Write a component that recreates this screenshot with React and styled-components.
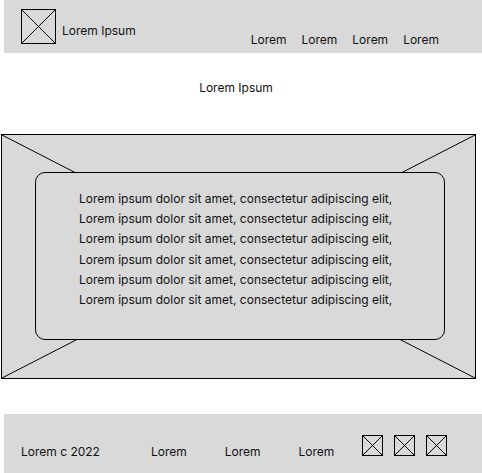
import React from "react";
import styled, { createGlobalStyle } from "styled-components";

const GlobalStyle = createGlobalStyle`
  html, body {
    margin: 0;
    padding: 0;
    background: #ffffff;
    font-family: Inter, "Liberation Sans", sans-serif;
    color: #111111;
  }
`;

const Page = styled.div`
  width: 482px;
  display: flex;
  flex-direction: column;
`;

const Header = styled.header`
  margin-left: 4px;
  height: 53px;
  background: #d9d9d9;
  display: flex;
  align-items: flex-start;
  padding-left: 17px;
  box-sizing: border-box;
  font-size: 12px;
`;

const Brand = styled.div`
  display: flex;
  align-items: flex-start;
  gap: 6px;
  margin-top: 9px;
`;

const BrandName = styled.span`
  padding-top: 14px;
`;

const Nav = styled.nav`
  display: flex;
  gap: 15px;
  margin-left: 115px;
  margin-top: 32px;
`;

const Title = styled.h1`
  margin: 27px 0 0;
  width: 472px;
  text-align: center;
  font-size: 12px;
  font-weight: 400;
  line-height: 16px;
`;

const Hero = styled.section`
  margin: 38px 0 0 1px;
  width: 475px;
  height: 245px;
  box-sizing: border-box;
  border: 1px solid #000;
  background: #d9d9d9;
  display: grid;
  position: relative;
`;

const HeroArt = styled.svg`
  position: absolute;
  inset: 0;
  width: 100%;
  height: 100%;
`;

const Card = styled.div`
  position: relative;
  margin: 37px 30px 38px 33px;
  border: 1px solid #000;
  border-radius: 10px;
  background: #d9d9d9;
  padding: 16px 0 0 43px;
  font-size: 12px;
  line-height: 20.2px;
`;

const Footer = styled.footer`
  margin: 35px 0 0 4px;
  height: 60px;
  background: #d9d9d9;
  display: flex;
  align-items: center;
  padding-left: 17px;
  box-sizing: border-box;
  font-size: 12px;
`;

const FootText = styled.span`
  margin-left: ${(p) => p.$gap || 0}px;
  padding-top: 15px;
`;

const Icons = styled.div`
  display: flex;
  gap: 11px;
  margin-left: 28px;
  margin-top: 2px;
`;

const Box = ({ size }) => (
  <svg width={size} height={size} viewBox={`0 0 ${size} ${size}`}>
    <rect x="0.5" y="0.5" width={size - 1} height={size - 1} fill="none" stroke="#000" />
    <line x1="0.5" y1="0.5" x2={size - 0.5} y2={size - 0.5} stroke="#000" />
    <line x1={size - 0.5} y1="0.5" x2="0.5" y2={size - 0.5} stroke="#000" />
  </svg>
);

const line = "Lorem ipsum dolor sit amet, consectetur adipiscing elit,";

export default function App() {
  return (
    <Page>
      <GlobalStyle />
      <Header>
        <Brand>
          <Box size={35} />
          <BrandName>Lorem Ipsum</BrandName>
        </Brand>
        <Nav>
          <span>Lorem</span>
          <span>Lorem</span>
          <span>Lorem</span>
          <span>Lorem</span>
        </Nav>
      </Header>
      <Title>Lorem Ipsum</Title>
      <Hero>
        <HeroArt viewBox="0 0 473 243" preserveAspectRatio="none">
          <line x1="0" y1="0" x2="473" y2="243" stroke="#000" />
          <line x1="473" y1="0" x2="0" y2="243" stroke="#000" />
        </HeroArt>
        <Card>
          {Array.from({ length: 6 }).map((_, i) => (
            <div key={i}>{line}</div>
          ))}
        </Card>
      </Hero>
      <Footer>
        <FootText>Lorem c 2022</FootText>
        <FootText $gap={51}>Lorem</FootText>
        <FootText $gap={38}>Lorem</FootText>
        <FootText $gap={38}>Lorem</FootText>
        <Icons>
          <Box size={21} />
          <Box size={21} />
          <Box size={21} />
        </Icons>
      </Footer>
    </Page>
  );
}
